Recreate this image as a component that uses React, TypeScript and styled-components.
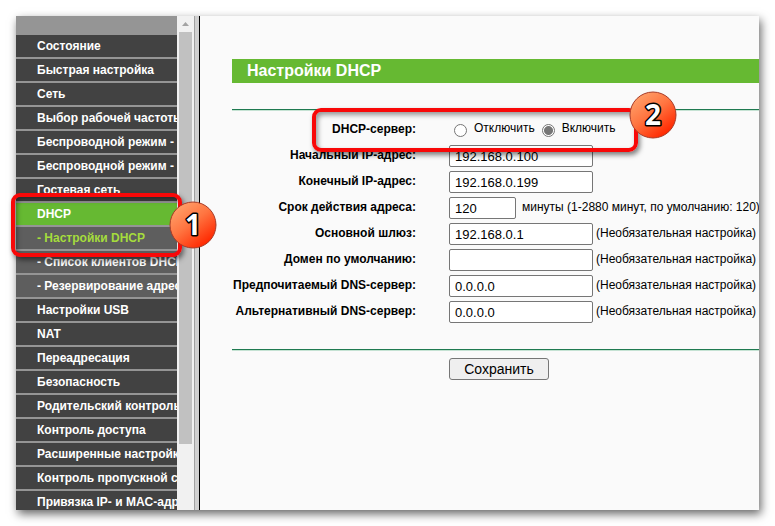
import React, { useState } from "react";
import styled, { createGlobalStyle, css } from "styled-components";

const GlobalStyle = createGlobalStyle`
  *, *::before, *::after { box-sizing: border-box; }
  body {
    margin: 0;
    background: #fff;
    color: #000;
    font-family: "Liberation Sans", Arial, sans-serif;
    font-size: 12px;
    line-height: 16px;
  }
`;

const Page = styled.div`
  position: relative;
  height: 100vh;
  padding: 16px;
  overflow: hidden;
`;

const Frameset = styled.div`
  display: flex;
  height: 100%;
  overflow: hidden;
  background: #fafafa;
  box-shadow: 2px 4px 9px rgba(0, 0, 0, 0.6);
`;

const Sidebar = styled.nav`
  flex: 0 0 161px;
  padding-top: 19px;
  overflow: hidden;
  background: #959595;
`;

const MenuList = styled.ul`
  display: flex;
  flex-direction: column;
  gap: 2px;
  margin: 0;
  padding: 0;
  list-style: none;
`;

type Kind = "main" | "open" | "sub" | "current";

const menuColors: Record<Kind, ReturnType<typeof css>> = {
  main: css`background: #424242; color: #fff;`,
  open: css`background: #66b932; color: #fff;`,
  sub: css`background: #5e5e5e; color: #fff;`,
  current: css`background: #5e5e5e; color: #a5dc3c;`,
};

const MenuLink = styled.a<{ $kind: Kind }>`
  display: block;
  padding-left: 21px;
  font-weight: bold;
  line-height: 22px;
  white-space: nowrap;
  text-decoration: none;
  ${(p) => menuColors[p.$kind]}
`;

const Scrollbar = styled.div`
  display: flex;
  flex: 0 0 17px;
  flex-direction: column;
  align-items: center;
  padding-bottom: 66px;
  background: #f1f1f1;
`;

const ScrollArrow = styled.svg`
  flex: none;
  width: 17px;
  height: 16px;
`;

const ScrollThumb = styled.div`
  flex: 1;
  width: 13px;
  background: #c1c1c1;
`;

const FrameBorder = styled.div`
  flex: 0 0 6px;
  background: #d0d0d0;
  border-left: 1px solid #a0a0a0;
  border-right: 1px solid #000;
`;

const Content = styled.main`
  flex: 1;
  min-width: 0;
  padding: 43px 0 0 32px;
  overflow: hidden;
`;

const Title = styled.h1`
  margin: 0 0 26px;
  padding-left: 15px;
  background: #66b932;
  color: #fff;
  font-size: 16px;
  line-height: 24px;
`;

const Rule = styled.hr`
  height: 2px;
  margin: 0;
  border: 0;
  border-top: 1px solid #1f7a50;
  background: #c5e2d3;
`;

const Fields = styled.div`
  display: flex;
  flex-direction: column;
  gap: 4px;
  padding: 8px 0 26px;
`;

const Row = styled.div`
  display: grid;
  grid-template-columns: 184px auto;
  column-gap: 33px;
  height: 22px;
  white-space: nowrap;
`;

const labelText = css`
  font-weight: bold;
  line-height: 20px;
  text-align: right;
`;

const FieldLabel = styled.label`
  ${labelText}
`;

const GroupLabel = styled.span`
  ${labelText}
`;

const Control = styled.div<{ $gap: number }>`
  display: flex;
  gap: ${(p) => p.$gap}px;
  line-height: 20px;
`;

const TextBox = styled.input<{ $short?: boolean }>`
  width: ${(p) => (p.$short ? 67 : 144)}px;
  height: 22px;
  padding: 0 5px;
  border: 1px solid #767676;
  border-radius: 2px;
  background: #fff;
  color: #000;
  font: 13px "Liberation Sans", Arial, sans-serif;
`;

const RadioLabel = styled.label`
  display: flex;
  gap: 7px;
  padding-left: 5px;
  line-height: 18px;
`;

const Radio = styled.input`
  appearance: none;
  width: 13px;
  height: 13px;
  margin: 5px 0 0;
  border: 1px solid #767676;
  border-radius: 50%;
  background: #fff;

  &:checked {
    background: radial-gradient(circle, #767676 4px, #fff 5px);
  }
`;

const Actions = styled.div`
  padding: 7px 0 0 217px;
`;

const SaveButton = styled.button`
  width: 100px;
  height: 22px;
  padding: 0;
  border: 1px solid #767676;
  border-radius: 3px;
  background: #efefef;
  color: #000;
  font: 14px "Liberation Sans", Arial, sans-serif;
`;

const Highlight = styled.div<{ $x: number; $y: number; $w: number; $h: number }>`
  position: absolute;
  left: ${(p) => p.$x}px;
  top: ${(p) => p.$y}px;
  width: ${(p) => p.$w}px;
  height: ${(p) => p.$h}px;
  border: 4px solid #f80808;
  border-radius: 9px;
  box-shadow: 2px 3px 5px rgba(0, 0, 0, 0.5), inset 2px 3px 5px rgba(0, 0, 0, 0.4);
  pointer-events: none;
`;

const StepBadge = styled.svg<{ $x: number; $y: number }>`
  position: absolute;
  left: ${(p) => p.$x}px;
  top: ${(p) => p.$y}px;
  width: 48px;
  height: 48px;
  pointer-events: none;

  text {
    font: bold 28px "Open Sans", "Noto Sans", sans-serif;
    text-anchor: middle;
    paint-order: stroke;
    fill: #fff;
    stroke: #000;
    stroke-width: 3px;
    stroke-linejoin: round;
  }
`;

const menu: { text: string; kind: Kind }[] = [
  { text: "Состояние", kind: "main" },
  { text: "Быстрая настройка", kind: "main" },
  { text: "Сеть", kind: "main" },
  { text: "Выбор рабочей частоты", kind: "main" },
  { text: "Беспроводной режим -", kind: "main" },
  { text: "Беспроводной режим -", kind: "main" },
  { text: "Гостевая сеть", kind: "main" },
  { text: "DHCP", kind: "open" },
  { text: "- Настройки DHCP", kind: "current" },
  { text: "- Список клиентов DHCP", kind: "sub" },
  { text: "- Резервирование адресов", kind: "sub" },
  { text: "Настройки USB", kind: "main" },
  { text: "NAT", kind: "main" },
  { text: "Переадресация", kind: "main" },
  { text: "Безопасность", kind: "main" },
  { text: "Родительский контроль", kind: "main" },
  { text: "Контроль доступа", kind: "main" },
  { text: "Расширенные настройки", kind: "main" },
  { text: "Контроль пропускной способности", kind: "main" },
  { text: "Привязка IP- и MAC-адресов", kind: "main" },
];

const optional = "(Необязательная настройка)";

const fields: { id: string; label: string; value: string; note?: string; short?: boolean }[] = [
  { id: "start", label: "Начальный IP-адрес:", value: "192.168.0.100" },
  { id: "end", label: "Конечный IP-адрес:", value: "192.168.0.199" },
  { id: "lease", label: "Срок действия адреса:", value: "120", note: "минуты (1-2880 минут, по умолчанию: 120)", short: true },
  { id: "gateway", label: "Основной шлюз:", value: "192.168.0.1", note: optional },
  { id: "domain", label: "Домен по умолчанию:", value: "", note: optional },
  { id: "dns1", label: "Предпочитаемый DNS-сервер:", value: "0.0.0.0", note: optional },
  { id: "dns2", label: "Альтернативный DNS-сервер:", value: "0.0.0.0", note: optional },
];

function Step({ n, x, y }: { n: number; x: number; y: number }) {
  return (
    <StepBadge $x={x} $y={y} viewBox="0 0 48 48">
      <defs>
        <linearGradient id={`step${n}`} x1="0.2" y1="0.1" x2="0.8" y2="0.9">
          <stop offset="0" stopColor="#ff9c66" />
          <stop offset="0.45" stopColor="#ff7440" />
          <stop offset="1" stopColor="#ff2800" />
        </linearGradient>
      </defs>
      <circle cx="24" cy="24" r="23" fill={`url(#step${n})`} stroke="#a83a26" />
      <text x="24" y="34">{n}</text>
    </StepBadge>
  );
}

export default function App() {
  const [enabled, setEnabled] = useState(true);
  return (
    <>
      <GlobalStyle />
      <Page>
        <Frameset>
          <Sidebar>
            <MenuList>
              {menu.map((m, i) => (
                <li key={i}>
                  <MenuLink href="#" $kind={m.kind}>{m.text}</MenuLink>
                </li>
              ))}
            </MenuList>
          </Sidebar>
          <Scrollbar>
            <ScrollArrow viewBox="0 0 17 16">
              <path d="M5 10 L8.5 6 L12 10 Z" fill="#a3a3a3" />
            </ScrollArrow>
            <ScrollThumb />
          </Scrollbar>
          <FrameBorder />
          <Content>
            <Title>Настройки DHCP</Title>
            <Rule />
            <Fields>
              <Row role="radiogroup" aria-labelledby="server">
                <GroupLabel id="server">DHCP-сервер:</GroupLabel>
                <Control $gap={2}>
                  <RadioLabel>
                    <Radio type="radio" name="dhcp" checked={!enabled} onChange={() => setEnabled(false)} />
                    Отключить
                  </RadioLabel>
                  <RadioLabel>
                    <Radio type="radio" name="dhcp" checked={enabled} onChange={() => setEnabled(true)} />
                    Включить
                  </RadioLabel>
                </Control>
              </Row>
              {fields.map((f) => (
                <Row key={f.id}>
                  <FieldLabel htmlFor={f.id}>{f.label}</FieldLabel>
                  <Control $gap={f.short ? 6 : 3}>
                    <TextBox id={f.id} type="text" defaultValue={f.value} $short={f.short} />
                    {f.note && <span>{f.note}</span>}
                  </Control>
                </Row>
              ))}
            </Fields>
            <Rule />
            <Actions>
              <SaveButton type="button">Сохранить</SaveButton>
            </Actions>
          </Content>
        </Frameset>
        <Highlight $x={11} $y={193} $w={171} $h={64} />
        <Highlight $x={312} $y={108} $w={326} $h={44} />
        <Step n={1} x={169} y={201} />
        <Step n={2} x={629} y={91} />
      </Page>
    </>
  );
}
